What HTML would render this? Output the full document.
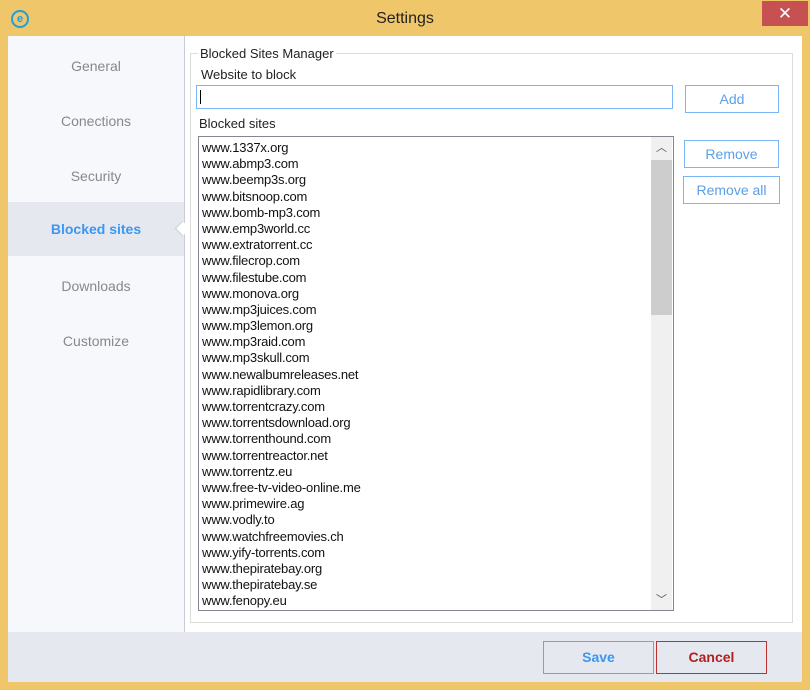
<!DOCTYPE html>
<html><head><style>
body{margin:0;width:810px;height:690px;background:#efc66a;font-family:"Liberation Sans",sans-serif;position:relative;overflow:hidden}
.a{position:absolute}
.title{left:0;top:10px;width:810px;text-align:center;font-size:16px;color:#222}
.close{left:762px;top:1px;width:46px;height:25px;background:#c75050;color:#fff;text-align:center;font-size:17px;line-height:25px}
.client{left:8px;top:36px;width:794px;height:646px;background:#fff}
.side{left:8px;top:36px;width:176px;height:596px;background:#f6f8fb;border-right:1px solid #c8ccd4}
.nav{width:176px;text-align:center;font-size:14px;color:#888}
.sel{background:#e6e8f0;color:#3b97f0;font-weight:bold;height:54px;line-height:54px}
.foot{left:8px;top:632px;width:794px;height:50px;background:#e6e8f0}
.btn{border:1px solid #7ab6f5;color:#5b9fe6;text-align:center;font-size:14px;background:#fff;box-sizing:border-box}
.list div{height:16.2px;line-height:16px;font-size:13px;color:#111;letter-spacing:-0.2px}
</style></head><body>
<div class="a" style="left:11px;top:10px;width:18px;height:18px;border:2px solid #1ea0e0;border-radius:50%;box-sizing:border-box;color:#1ea0e0;font-size:11px;font-weight:bold;text-align:center;line-height:14px">e</div>
<div class="a title">Settings</div>
<div class="a close">✕</div>
<div class="a client"></div>
<div class="a side">
<div class="nav a" style="top:22px">General</div>
<div class="nav a" style="top:77px">Conections</div>
<div class="nav a" style="top:132px">Security</div>
<div class="nav a sel" style="top:166px">Blocked sites</div>
<div class="nav a" style="top:242px">Downloads</div>
<div class="nav a" style="top:297px">Customize</div>
</div>
<div class="a" style="left:177px;top:223px;width:10px;height:10px;background:#fff;transform:rotate(45deg);border-left:1px solid #c8ccd4;border-bottom:1px solid #c8ccd4"></div>
<div class="a" style="left:190px;top:53px;width:601px;height:568px;border:1px solid #dcdcdc"></div>
<div class="a" style="left:198px;top:46px;background:#fff;padding:0 2px;font-size:13px;color:#222">Blocked Sites Manager</div>
<div class="a" style="left:201px;top:67px;font-size:13px;color:#222">Website to block</div>
<div class="a" style="left:196px;top:85px;width:477px;height:24px;border:1px solid #7ab6f5;box-sizing:border-box"><div class="a" style="left:3px;top:4px;width:1px;height:14px;background:#000"></div></div>
<div class="a btn" style="left:685px;top:85px;width:94px;height:28px;line-height:26px">Add</div>
<div class="a" style="left:199px;top:116px;font-size:13px;color:#222">Blocked sites</div>
<div class="a btn" style="left:684px;top:140px;width:95px;height:28px;line-height:26px">Remove</div>
<div class="a btn" style="left:683px;top:176px;width:97px;height:28px;line-height:26px">Remove all</div>
<div class="a" style="left:198px;top:136px;width:476px;height:475px;border:1px solid #828790;box-sizing:border-box;background:#fff">
<div class="a" style="left:452px;top:0;width:21px;height:473px;background:#f0f0f0"></div>
<div class="a" style="left:452px;top:23px;width:21px;height:155px;background:#cdcdcd"></div>
<div class="a" style="left:452px;top:2px;width:21px;text-align:center;font-size:11px;color:#555">︿</div>
<div class="a" style="left:452px;top:454px;width:21px;text-align:center;font-size:11px;color:#555">﹀</div>
<div class="a list" style="left:3px;top:3px">
<div>www.1337x.org</div><div>www.abmp3.com</div><div>www.beemp3s.org</div><div>www.bitsnoop.com</div><div>www.bomb-mp3.com</div><div>www.emp3world.cc</div><div>www.extratorrent.cc</div><div>www.filecrop.com</div><div>www.filestube.com</div><div>www.monova.org</div><div>www.mp3juices.com</div><div>www.mp3lemon.org</div><div>www.mp3raid.com</div><div>www.mp3skull.com</div><div>www.newalbumreleases.net</div><div>www.rapidlibrary.com</div><div>www.torrentcrazy.com</div><div>www.torrentsdownload.org</div><div>www.torrenthound.com</div><div>www.torrentreactor.net</div><div>www.torrentz.eu</div><div>www.free-tv-video-online.me</div><div>www.primewire.ag</div><div>www.vodly.to</div><div>www.watchfreemovies.ch</div><div>www.yify-torrents.com</div><div>www.thepiratebay.org</div><div>www.thepiratebay.se</div><div>www.fenopy.eu</div>
</div></div>
<div class="a foot"></div>
<div class="a btn" style="left:543px;top:641px;width:111px;height:33px;line-height:31px;font-weight:bold;color:#3b97f0;background:#e6e8f0;border-color:#5aaaf5">Save</div>
<div class="a btn" style="left:656px;top:641px;width:111px;height:33px;line-height:31px;font-weight:bold;color:#b02020;background:#e6e8f0;border-color:#c03030">Cancel</div>
</body></html>
